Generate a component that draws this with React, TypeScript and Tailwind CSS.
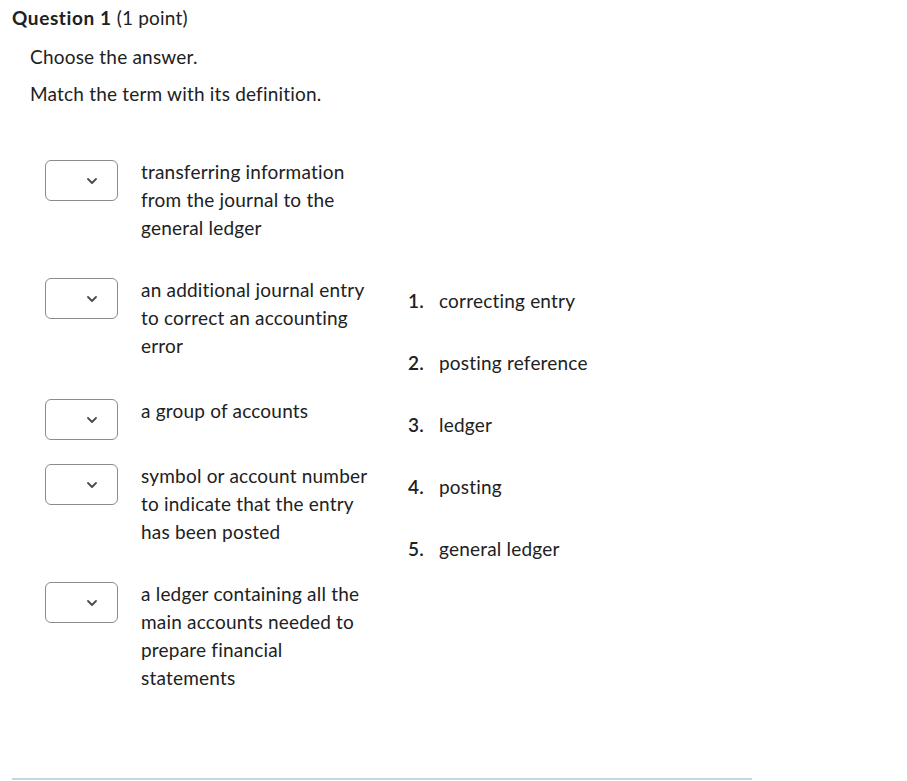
const definitions = [
  { text: 'transferring information from the journal to the general ledger', gap: 'mt-0' },
  { text: 'an additional journal entry to correct an accounting error', gap: 'mt-[34px]' },
  { text: 'a group of accounts', gap: 'mt-[37px]' },
  { text: 'symbol or account number to indicate that the entry has been posted', gap: 'mt-[22px]' },
  { text: 'a ledger containing all the main accounts needed to prepare financial statements', gap: 'mt-[34px]' },
];

const terms = ['correcting entry', 'posting reference', 'ledger', 'posting', 'general ledger'];

const SelectBox = () => (
  <div className="mt-[2px] w-[73px] h-[41px] shrink-0 rounded-[6px] border border-[#868c8f] bg-white flex items-center justify-end pr-[20px]">
    <svg width="10" height="6" viewBox="0 0 10 6" fill="none">
      <path d="M1 1l4 4 4-4" stroke="#494c4e" strokeWidth="1.8" strokeLinecap="round" strokeLinejoin="round" />
    </svg>
  </div>
);

const App = () => {
  return (
    <div className="min-h-screen bg-white text-[#202122] font-['Lato','Liberation_Sans',sans-serif] text-[19px] leading-[28px] tracking-[0.2px]">
      <div className="px-[12px] pt-[4px]">
        <h2 className="text-[19px] leading-[28px]">
          <span className="font-bold tracking-[0.6px]">Question 1</span> (1 point)
        </h2>

        <div className="pl-[18px]">
          <p className="mt-[11px]">Choose the answer.</p>
          <p className="mt-[9px]">Match the term with its definition.</p>

          <div className="mt-[50px] pl-[15px] flex items-center">
            <div className="flex flex-col w-[328px]">
              {definitions.map((d) => (
                <div key={d.text} className={`flex items-start gap-[23px] ${d.gap}`}>
                  <SelectBox />
                  <p className="w-[232px]">{d.text}</p>
                </div>
              ))}
            </div>

            <ol className="ml-[35px] flex flex-col gap-[34px]">
              {terms.map((t, i) => (
                <li key={t} className="flex">
                  <span className="w-[31px] font-semibold">{i + 1}.</span>
                  <span>{t}</span>
                </li>
              ))}
            </ol>
          </div>
        </div>

        <div className="mt-[86px] w-[740px] h-[2px] bg-[#cdd5dc]" />
      </div>
    </div>
  );
};

export default App;
